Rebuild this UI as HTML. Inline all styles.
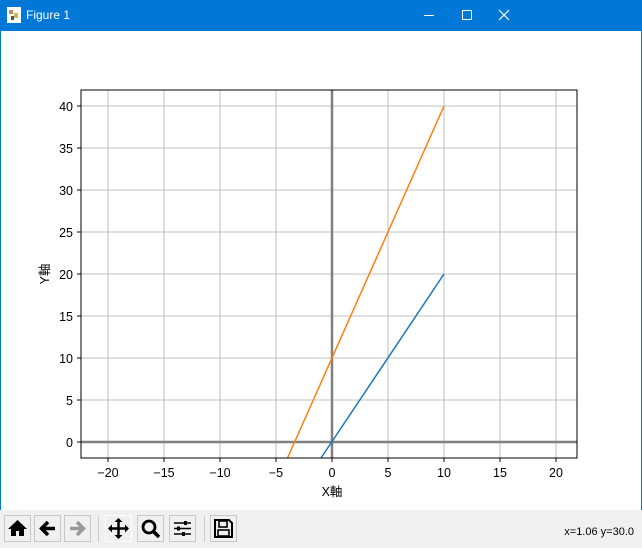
<!DOCTYPE html>
<html><head><meta charset="utf-8"><style>
body{margin:0;width:642px;height:548px;overflow:hidden;background:#fff;font-family:"Liberation Sans","Noto Sans CJK JP",sans-serif;position:relative}
.title{position:absolute;left:0;top:0;width:642px;height:31px;background:#0078d7;color:#fff;font-size:12px}
.tb{position:absolute;left:0;top:510px;width:642px;height:38px;background:#f0f0f0}
.btn{position:absolute;top:5px;width:27px;height:27px;border:1px solid #c8c8c8;background:#f0f0f0;box-sizing:border-box}
</style></head><body>
<div class="title">
<svg style="position:absolute;left:7px;top:7px" width="14" height="16"><rect width="14" height="16" fill="#fff"/><rect x="2" y="3" width="4" height="4" fill="#c86"/><rect x="7" y="6" width="4" height="5" fill="#cb5"/><rect x="4" y="9" width="3" height="4" fill="#555"/></svg>
<span style="position:absolute;left:26px;top:8px">Figure 1</span>
<div style="position:absolute;left:424px;top:15px;width:10px;height:1px;background:#fff"></div>
<div style="position:absolute;left:462px;top:10px;width:8px;height:8px;border:1px solid #fff"></div>
<svg style="position:absolute;left:498px;top:9px" width="12" height="12"><path d="M1 1L11 11M11 1L1 11" stroke="#fff" stroke-width="1.2"/></svg>
</div>
<div style="position:absolute;left:0;top:31px;width:1px;height:479px;background:#0078d7"></div>
<div style="position:absolute;right:0;top:31px;width:1px;height:479px;background:#0078d7"></div>
<svg style="position:absolute;left:0;top:31px" width="642" height="479" font-family="Liberation Sans Narrow, Liberation Sans, Noto Sans CJK JP, sans-serif" font-size="12.5">
<g transform="translate(0,-31)">
<g stroke="#b0b0b0" stroke-width="0.8">
<path d="M108 90V458M164 90V458M220 90V458M276 90V458M388 90V458M444 90V458M500 90V458M556 90V458"/>
<path d="M81 400H577M81 358H577M81 316H577M81 274H577M81 232H577M81 190H577M81 148H577M81 106H577"/>
</g>
<path d="M81 442H577M332 90V458" stroke="#808080" stroke-width="2.5"/>
<path d="M321 458L444 274" stroke="#1f77b4" stroke-width="1.5" fill="none"/>
<path d="M287.5 458L444 106" stroke="#ff7f0e" stroke-width="1.5" fill="none"/>
<rect x="81" y="90" width="496" height="368" fill="none" stroke="#000" stroke-width="1"/>
<g stroke="#000"><path d="M108 458v4M164 458v4M220 458v4M276 458v4M332 458v4M388 458v4M444 458v4M500 458v4M556 458v4M81 442h-4M81 400h-4M81 358h-4M81 316h-4M81 274h-4M81 232h-4M81 190h-4M81 148h-4M81 106h-4"/></g>
<g text-anchor="middle" fill="#000">
<text x="108" y="477">−20</text><text x="164" y="477">−15</text><text x="220" y="477">−10</text><text x="276" y="477">−5</text><text x="332" y="477">0</text><text x="388" y="477">5</text><text x="444" y="477">10</text><text x="500" y="477">15</text><text x="556" y="477">20</text>
<text x="332" y="496">X軸</text>
</g>
<g text-anchor="end" fill="#000">
<text x="73" y="447">0</text><text x="73" y="405">5</text><text x="73" y="363">10</text><text x="73" y="321">15</text><text x="73" y="279">20</text><text x="73" y="237">25</text><text x="73" y="195">30</text><text x="73" y="153">35</text><text x="73" y="111">40</text>
</g>
<text transform="translate(49,274) rotate(-90)" text-anchor="middle">Y軸</text>
</g></svg>
<div class="tb">
<div class="btn" style="left:4px"><svg width="25" height="25"><path d="M12.5 4L3 13h3v7h5v-5h3v5h5v-7h3z" fill="#000"/></svg></div>
<div class="btn" style="left:34px"><svg width="25" height="25"><path d="M20 12.5H8M13 6l-6.5 6.5L13 19" stroke="#000" stroke-width="3.5" fill="none"/></svg></div>
<div class="btn" style="left:64px"><svg width="25" height="25"><path d="M5 12.5H17M12 6l6.5 6.5L12 19" stroke="#999" stroke-width="3.5" fill="none"/></svg></div>
<div style="position:absolute;left:98px;top:6px;width:1px;height:26px;background:#ccc"></div>
<div class="btn" style="left:105px;border-color:#fff"><svg width="25" height="25"><path d="M12.5 3v19M3 12.5h19" stroke="#000" stroke-width="2.5"/><path d="M12.5 2l-4 4h8zM12.5 23l-4-4h8zM2 12.5l4-4v8zM23 12.5l-4-4v8z"/></svg></div>
<div class="btn" style="left:137px"><svg width="25" height="25"><circle cx="11" cy="11" r="6" stroke="#000" stroke-width="2.8" fill="none"/><path d="M15 15l6 6" stroke="#000" stroke-width="3.5"/></svg></div>
<div class="btn" style="left:169px"><svg width="25" height="25"><path d="M4 7h17M4 12.5h17M4 18h17" stroke="#000" stroke-width="1.6"/><rect x="14" y="5" width="3" height="4"/><rect x="7" y="10.5" width="3" height="4"/><rect x="12" y="16" width="3" height="4"/></svg></div>
<div style="position:absolute;left:204px;top:6px;width:1px;height:26px;background:#ccc"></div>
<div class="btn" style="left:210px"><svg width="25" height="25"><path d="M4 4h14l3 3v14H4z" fill="none" stroke="#000" stroke-width="2"/><rect x="8" y="5" width="8" height="6" fill="none" stroke="#000" stroke-width="1.6"/><rect x="7" y="14" width="11" height="6" fill="none" stroke="#000" stroke-width="1.6"/></svg></div>
<span style="position:absolute;right:8px;top:16px;font-size:11px">x=1.06 y=30.0</span>
</div>
</body></html>
